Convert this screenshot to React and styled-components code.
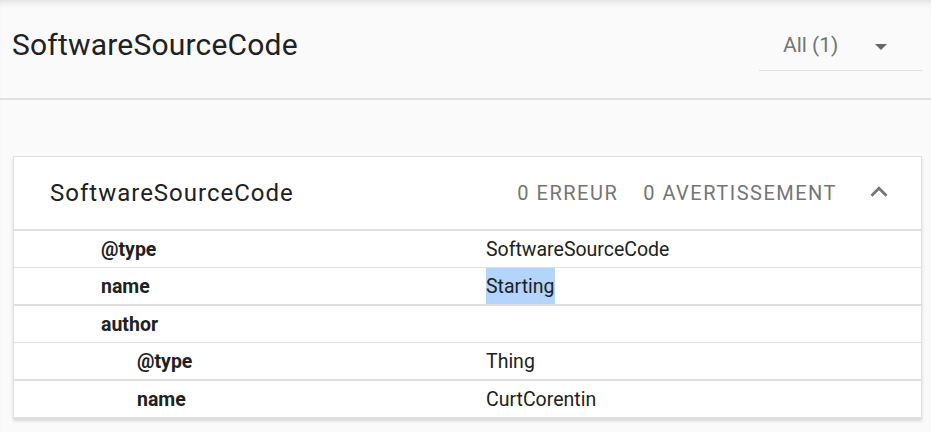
import React from 'react';
import styled, { createGlobalStyle } from 'styled-components';

const GlobalStyle = createGlobalStyle`
    html, body {
        margin: 0;
        padding: 0;
        background: #fafafa;
        font-family: Roboto, "Liberation Sans", sans-serif;
        color: #212121;
    }
`;

const Page = styled.div`
    width: 931px;
    min-height: 432px;
    background: #fafafa;
    box-shadow: inset 0 6px 6px -4px rgba(0, 0, 0, 0.12);
`;

const Header = styled.header`
    height: 100px;
    box-sizing: border-box;
    display: flex;
    align-items: center;
    justify-content: space-between;
    padding: 0 9px 10px 12px;
    border-bottom: 2px solid #e0e0e0;
`;

const PageTitle = styled.h1`
    margin: 0;
    font-size: 30px;
    font-weight: 400;
    letter-spacing: 0.2px;
    color: #212121;
`;

const Select = styled.div`
    width: 163px;
    height: 51px;
    margin-top: 2px;
    box-sizing: border-box;
    display: flex;
    align-items: center;
    justify-content: space-between;
    padding: 0 35px 0 24px;
    border-bottom: 1px solid #e0e0e0;
    font-size: 21px;
    color: #757575;
`;

const Arrow = styled.span`
    width: 0;
    height: 0;
    border-left: 6px solid transparent;
    border-right: 6px solid transparent;
    border-top: 6px solid #666;
    margin-top: 4px;
`;

const Content = styled.main`
    padding: 56px 9px 12px 13px;
`;

const Card = styled.section`
    background: #fff;
    border: 1px solid #e0e0e0;
    box-shadow: 0 2px 3px rgba(0, 0, 0, 0.14);
`;

const CardHeader = styled.div`
    height: 72px;
    display: flex;
    align-items: center;
    padding: 0 25px 0 36px;
    border-bottom: 2px solid #e0e0e0;
`;

const CardTitle = styled.h2`
    margin: 0;
    flex: 1;
    font-size: 24px;
    font-weight: 400;
    letter-spacing: 1px;
    color: #212121;
`;

const Count = styled.span`
    font-size: 20px;
    letter-spacing: 1.5px;
    text-transform: uppercase;
    color: #757575;
    margin-left: 25px;
`;

const Chevron = styled.svg`
    width: 34px;
    height: 34px;
    margin-left: 25px;
    margin-top: -2px;
    fill: #757575;
`;

const Row = styled.div`
    display: grid;
    grid-template-columns: ${p => (p.$nested ? '349px' : '385px')} 1fr;
    height: 36px;
    align-items: center;
    padding-left: ${p => (p.$nested ? '123px' : '87px')};
    border-bottom: ${p => (p.$last ? '2px' : '1px')} solid #e0e0e0;
    font-size: 19.5px;
`;

const Key = styled.span`
    font-weight: 700;
    color: #212121;
`;

const Value = styled.span`
    align-self: stretch;
    display: flex;
    align-items: center;
    color: #212121;
`;

const Selected = styled.span`
    align-self: stretch;
    display: flex;
    align-items: center;
    background: #b3d4fc;
`;

const rows = [
    { key: '@type', value: 'SoftwareSourceCode' },
    { key: 'name', value: 'Starting', selected: true, last: true },
    { key: 'author', value: '' },
    { key: '@type', value: 'Thing', nested: true, last: true },
    { key: 'name', value: 'CurtCorentin', nested: true },
];

export default function App() {
    return (
        <Page>
            <GlobalStyle />
            <Header>
                <PageTitle>SoftwareSourceCode</PageTitle>
                <Select>
                    All (1)
                    <Arrow />
                </Select>
            </Header>
            <Content>
                <Card>
                    <CardHeader>
                        <CardTitle>SoftwareSourceCode</CardTitle>
                        <Count>0 Erreur</Count>
                        <Count>0 Avertissement</Count>
                        <Chevron viewBox="0 0 24 24">
                            <path d="M7.41 15.41L12 10.83l4.59 4.58L18 14l-6-6-6 6z" />
                        </Chevron>
                    </CardHeader>
                    {rows.map((r, i) => (
                        <Row key={i} $nested={r.nested} $last={r.last}>
                            <Key>{r.key}</Key>
                            <Value>
                                {r.selected ? <Selected>{r.value}</Selected> : r.value}
                            </Value>
                        </Row>
                    ))}
                </Card>
            </Content>
        </Page>
    );
}
